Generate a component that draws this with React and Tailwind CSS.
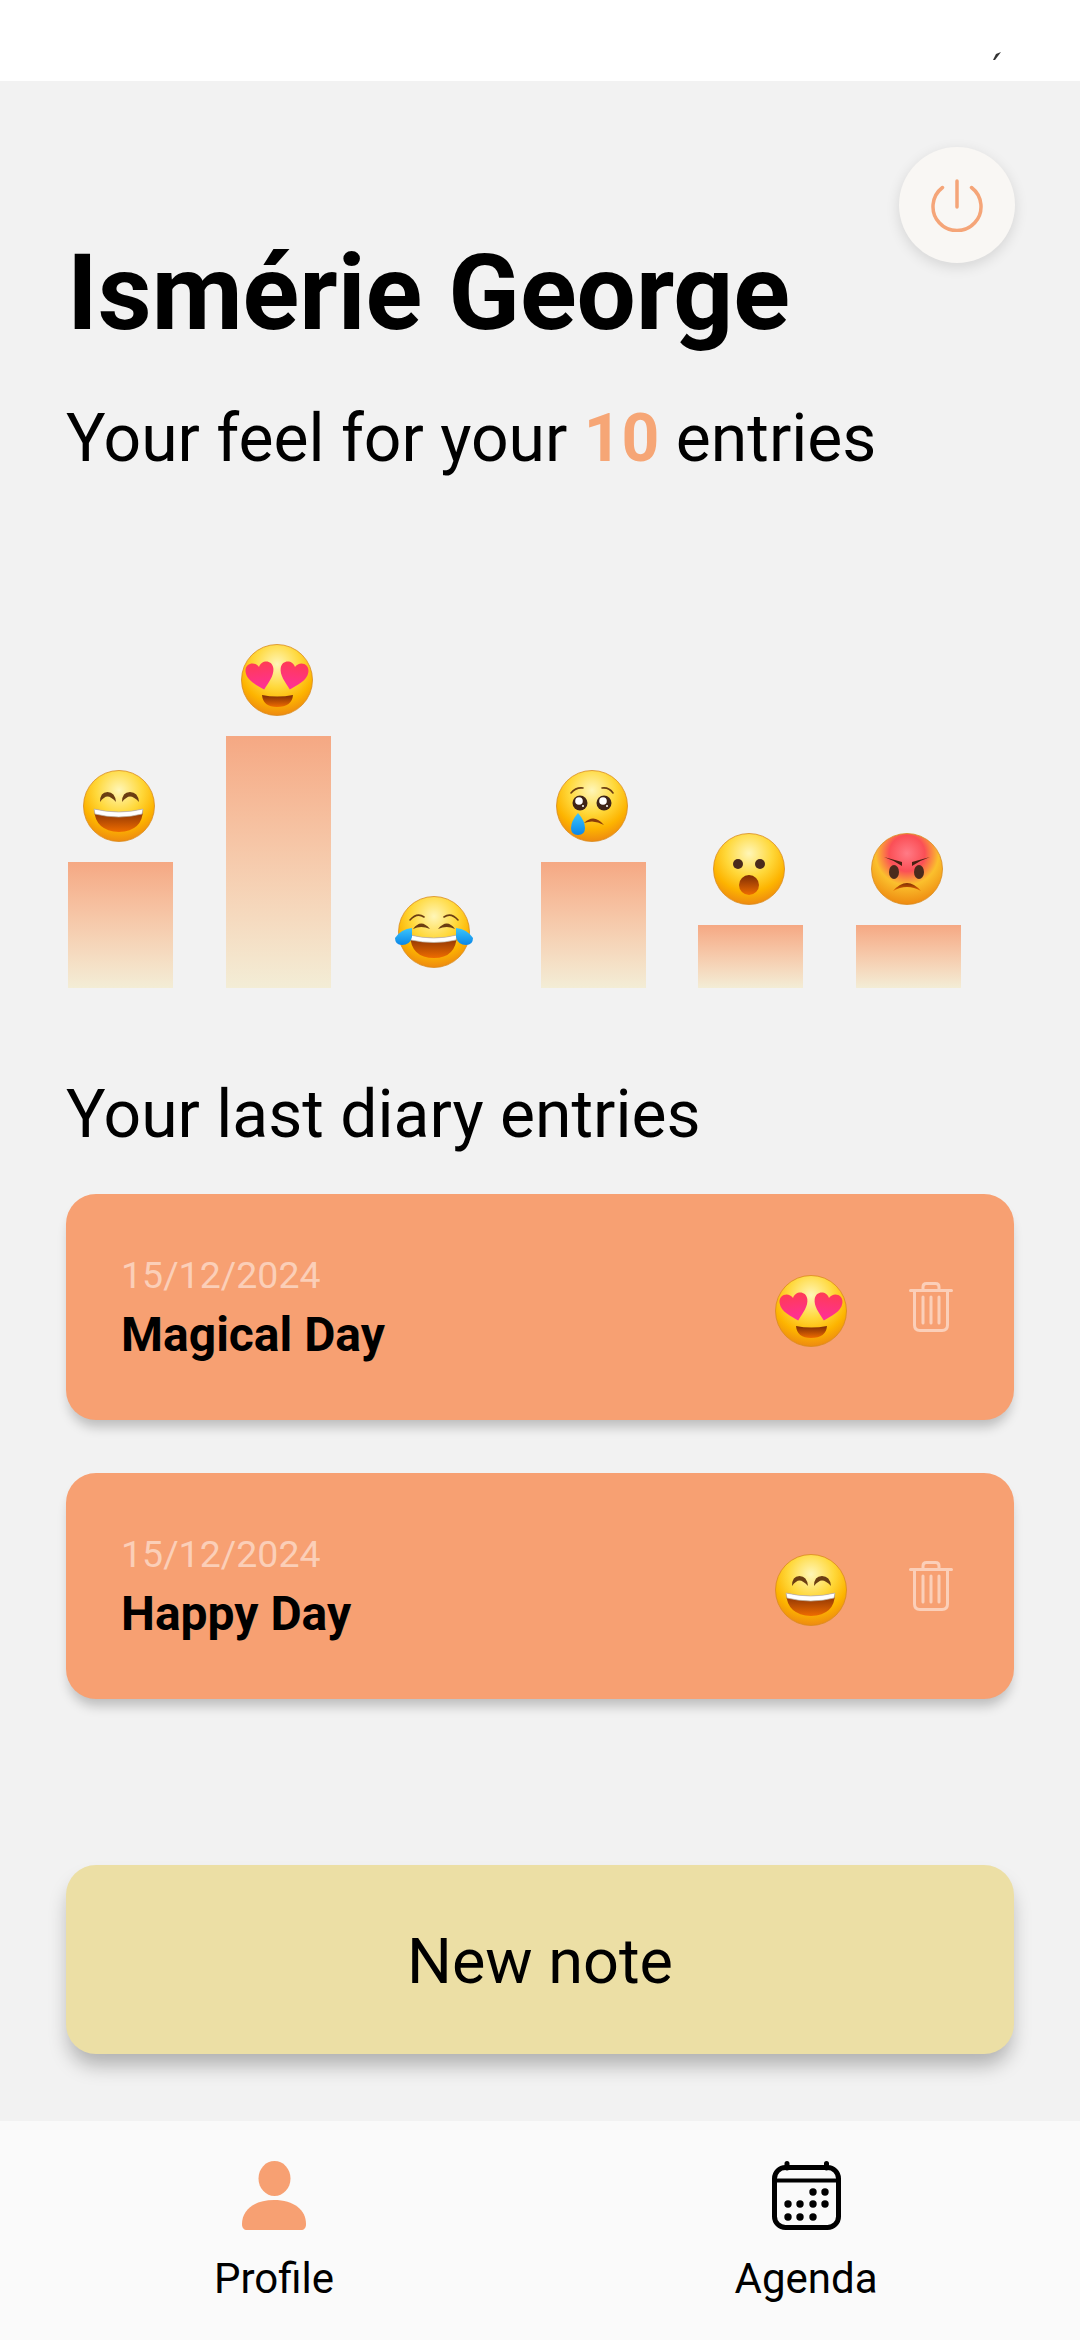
import { useId } from "react";

const bars = [
  { face: "grin", height: "h-[126px]" },
  { face: "love", height: "h-[252px]" },
  { face: "joy", height: "h-0" },
  { face: "sad", height: "h-[126px]" },
  { face: "wow", height: "h-[63px]" },
  { face: "angry", height: "h-[63px]" },
];

const entries = [
  { date: "15/12/2024", title: "Magical Day", face: "love" },
  { date: "15/12/2024", title: "Happy Day", face: "grin" },
];

function Grin({ id }) {
  return (
    <>
      <path d="M17 32Q17 22 24.5 22Q32 22 33 32Q28 26.500 24.5 26.500Q21 26.500 17 32Z" fill="#6b3d12" />
      <path d="M39 32Q39 22 47 22Q55 22 56 32Q51 26.500 47 26.500Q43.5 26.500 39 32Z" fill="#6b3d12" />
      <path d="M11 39Q36 45 60 39Q60 61 36 62Q12 61 11 39Z" fill={`url(#${id}m)`} />
      <path d="M11 39Q36 45 60 39Q59.500 42 59 44Q36 50 12 44Q11.500 42 11 39Z" fill="#fff" stroke="#b9b3a6" strokeWidth="0.7" />
    </>
  );
}

function Love({ id }) {
  const heart = "M0 -7C-3 -14 -14 -13 -14 -4C-14 5 -4 11 2 16C8 9 14 3 14 -4C14 -13 3 -14 0 -7Z";
  return (
    <>
      <path d={heart} transform="translate(19 30) rotate(-8)" fill={`url(#${id}h)`} />
      <path d={heart} transform="translate(53 30) rotate(8) scale(-1 1)" fill={`url(#${id}h)`} />
      <path d="M21 51Q36 54 52 51Q51 63 36 63Q22 63 21 51Z" fill={`url(#${id}m)`} />
    </>
  );
}

function Joy({ id }) {
  return (
    <>
      <path d="M12 24Q19 16 26 21" fill="none" stroke="#6b3d12" strokeWidth="1.600" strokeLinecap="round" />
      <path d="M46 21Q53 16 60 24" fill="none" stroke="#6b3d12" strokeWidth="1.600" strokeLinecap="round" />
      <path d="M15 33Q23 22 32 33Q23 29 15 33Z" fill="#6b3d12" />
      <path d="M40 33Q49 22 57 33Q49 29 40 33Z" fill="#6b3d12" />
      <path d="M12 39Q36 45 59 39Q58 62 36 62Q13 62 12 39Z" fill={`url(#${id}m)`} />
      <path d="M12 39Q36 45 59 39Q58.500 42 58 44Q36 49 13 44Q12.500 42 12 39Z" fill="#fff" stroke="#b9b3a6" strokeWidth="0.7" />
      <path d="M14 32Q3 33 -3 42Q-3 49 4 49Q12 49 14 41Z" fill={`url(#${id}t)`} />
      <path d="M58 32Q69 33 75 42Q75 49 68 49Q60 49 58 41Z" fill={`url(#${id}t)`} />
    </>
  );
}

function Sad({ id }) {
  return (
    <>
      <path d="M15 23Q20 17 27 18" fill="none" stroke="#6b3d12" strokeWidth="1.600" strokeLinecap="round" />
      <path d="M46 18Q53 17 57 23" fill="none" stroke="#6b3d12" strokeWidth="1.600" strokeLinecap="round" />
      <circle cx="24" cy="33" r="7.500" fill="#3e2418" />
      <circle cx="48" cy="33" r="7.500" fill="#3e2418" />
      <circle cx="23" cy="31" r="3.800" fill="#fff" />
      <circle cx="47" cy="31" r="3.800" fill="#fff" />
      <circle cx="27" cy="36" r="1" fill="#fff" />
      <circle cx="51" cy="36" r="1" fill="#fff" />
      <path d="M28 53Q38 43 48 55Q38 49 28 53Z" fill="#8a3c0a" />
      <path d="M22 43Q29 51 29 58Q29 65 22 65Q15 65 15 58Q15 51 22 43Z" fill={`url(#${id}t)`} />
    </>
  );
}

function Wow({ id }) {
  return (
    <>
      <circle cx="25" cy="31" r="5" fill="#4a2a1c" />
      <circle cx="47" cy="31" r="5" fill="#4a2a1c" />
      <ellipse cx="36" cy="52" rx="10" ry="10" fill={`url(#${id}m)`} />
    </>
  );
}

function Angry({ id }) {
  return (
    <>
      <path d="M13 24L31 29L31 33Q22 27 13 24Z" fill="#4a2012" />
      <path d="M59 24L41 29L41 33Q50 27 59 24Z" fill="#4a2012" />
      <ellipse cx="23" cy="39" rx="5" ry="7" fill="#4a2a1c" />
      <ellipse cx="48" cy="39" rx="5" ry="7" fill="#4a2a1c" />
      <path d="M22 58Q36 42 50 58Q36 50 22 58Z" fill={`url(#${id}m)`} />
    </>
  );
}

const faces = { grin: Grin, love: Love, joy: Joy, sad: Sad, wow: Wow, angry: Angry };

function Face({ name }) {
  const id = useId().replace(/[^a-zA-Z0-9]/g, "");
  const Inner = faces[name];
  return (
    <svg viewBox="0 0 72 72" className="h-[72px] w-[72px] shrink-0 overflow-visible">
      <defs>
        <radialGradient id={`${id}f`} cx="50%" cy="28%" r="72%">
          {name === "angry" ? (
            <>
              <stop offset="0%" stopColor="#ff7b86" />
              <stop offset="35%" stopColor="#fb4f56" />
              <stop offset="62%" stopColor="#fbc02d" />
              <stop offset="100%" stopColor="#ee8a10" />
            </>
          ) : (
            <>
              <stop offset="0%" stopColor="#fff6b8" />
              <stop offset="45%" stopColor="#ffd83a" />
              <stop offset="75%" stopColor="#fdb400" />
              <stop offset="100%" stopColor="#ee8a10" />
            </>
          )}
        </radialGradient>
        <linearGradient id={`${id}m`} x1="0" y1="0" x2="0" y2="1">
          <stop offset="0%" stopColor="#7e2c05" />
          <stop offset="100%" stopColor="#ee6c00" />
        </linearGradient>
        <linearGradient id={`${id}h`} x1="0" y1="0" x2="0" y2="1">
          <stop offset="0%" stopColor="#ff3b55" />
          <stop offset="100%" stopColor="#ff2f9a" />
        </linearGradient>
        <linearGradient id={`${id}t`} x1="0" y1="0" x2="0" y2="1">
          <stop offset="0%" stopColor="#3cc6fb" />
          <stop offset="100%" stopColor="#0a86e8" />
        </linearGradient>
      </defs>
      <circle cx="36" cy="36" r="35.500" fill={`url(#${id}f)`} stroke="#d98a1c" strokeWidth="0.8" />
      <Inner id={id} />
    </svg>
  );
}

function PowerIcon() {
  return (
    <svg viewBox="0 0 54 54" className="h-[54px] w-[54px]" fill="none" stroke="#f5a578" strokeWidth="3.500" strokeLinecap="round">
      <path d="M27 3V29" />
      <path d="M12.500 9.500A24 24 0 1 0 41.500 9.500" />
    </svg>
  );
}

function TrashIcon() {
  return (
    <svg viewBox="0 0 44 50" className="h-[50px] w-[44px] opacity-50" fill="none" stroke="#fff" strokeWidth="3" strokeLinecap="round" strokeLinejoin="round">
      <path d="M1.500 8.500H42.500" />
      <path d="M14 8V5Q14 1.500 17.500 1.500H26.500Q30 1.500 30 5V8" />
      <path d="M5.500 9V43Q5.500 48.500 11 48.500H33Q38.500 48.500 38.500 43V9" />
      <path d="M14 15V41M22 15V41M30 15V41" />
    </svg>
  );
}

function PersonIcon() {
  return (
    <svg viewBox="0 0 64 69" className="h-[69px] w-[64px]" fill="#f7a072">
      <ellipse cx="32.500" cy="17.500" rx="16" ry="17.500" />
      <path d="M0 63C0 49 12 39 32 39C52 39 64 49 64 63C64 67 62 69 59 69H5C2 69 0 67 0 63Z" />
    </svg>
  );
}

function CalendarIcon() {
  const dots = [
    [41, 31], [53, 31],
    [16, 43], [28, 43], [41, 43], [53, 43],
    [16, 56], [28, 56], [41, 56],
  ];
  return (
    <svg viewBox="0 0 69 69" className="h-[69px] w-[69px]" fill="none" stroke="#000" strokeWidth="5">
      <rect x="2.500" y="6.500" width="64" height="60" rx="11" />
      <path d="M2.500 19.500H66.500" strokeWidth="4" />
      <path d="M15 2.500V7M54.500 2.500V7" strokeLinecap="round" />
      {dots.map(([x, y]) => (
        <circle key={`${x}-${y}`} cx={x} cy={y} r="3.700" fill="#000" stroke="none" />
      ))}
    </svg>
  );
}

export default function App() {
  return (
    <div className="flex h-[2340px] w-[1080px] flex-col overflow-hidden bg-[#f2f2f2] font-['Roboto',sans-serif] text-black">
      {/* status bar, nothing left in it but a stray tick */}
      <div className="flex h-[81px] shrink-0 justify-end bg-white pr-[79px] pt-[52px]">
        <svg viewBox="0 0 8 8" className="h-[8px] w-[8px]" fill="#333">
          <path d="M0 8L3 2L8 0L2 8Z" />
        </svg>
      </div>

      <main className="relative flex flex-1 flex-col px-[66px]">
        <button className="absolute right-[65px] top-[66px] flex h-[116px] w-[116px] items-center justify-center rounded-full bg-[#f9f7f4] shadow-[0_4px_14px_rgba(0,0,0,0.12)]">
          <PowerIcon />
        </button>

        <h1 className="ml-[1px] mt-[151px] text-[105px] font-bold leading-[123px]">Ismérie George</h1>
        <p className="mt-[47px] text-[66px] leading-[74px]">
          Your feel for your <span className="font-bold text-[#f6a676]">10</span> entries
        </p>

        {/* mood chart */}
        <div className="ml-[2px] mt-[169px] flex h-[343px] items-end gap-[52.5px]">
          {bars.map((b) => (
            <div key={b.face} className="flex w-[105px] flex-col items-center">
              <div className="-ml-[3px] mb-[20px]">
                <Face name={b.face} />
              </div>
              <div className={`w-full bg-gradient-to-b from-[#f5a883] to-[#f3edd6] ${b.height}`} />
            </div>
          ))}
        </div>

        <h2 className="mt-[90px] text-[66px] leading-[74px]">Your last diary entries</h2>

        <div className="mt-[42px] flex flex-col gap-[53px]">
          {entries.map((e) => (
            <div
              key={e.title}
              className="flex h-[226px] items-center rounded-[30px] bg-[#f7a072] pl-[55px] pr-[61px] shadow-[0_10px_12px_-3px_rgba(0,0,0,0.22)]"
            >
              <div className="flex flex-1 flex-col">
                <span className="text-[37.5px] leading-[46px] text-white/50">{e.date}</span>
                <span className="mt-[9px] text-[48px] font-bold leading-[56px]">{e.title}</span>
              </div>
              <div className="mt-[8px]">
                <Face name={e.face} />
              </div>
              <div className="ml-[62px]">
                <TrashIcon />
              </div>
            </div>
          ))}
        </div>

        <button className="mt-[166px] flex h-[189px] items-center justify-center rounded-[30px] bg-[#ecdfa5] pt-[6px] text-[63px] shadow-[0_14px_20px_-3px_rgba(0,0,0,0.28)]">
          New note
        </button>
      </main>

      <nav className="grid h-[219px] shrink-0 grid-cols-2 bg-[#fafafa] px-[8px] pt-[40px]">
        <div className="flex flex-col items-center gap-[24px]">
          <PersonIcon />
          <span className="text-[42px] leading-[50px]">Profile</span>
        </div>
        <div className="flex flex-col items-center gap-[24px]">
          <CalendarIcon />
          <span className="text-[42px] leading-[50px]">Agenda</span>
        </div>
      </nav>
    </div>
  );
}
